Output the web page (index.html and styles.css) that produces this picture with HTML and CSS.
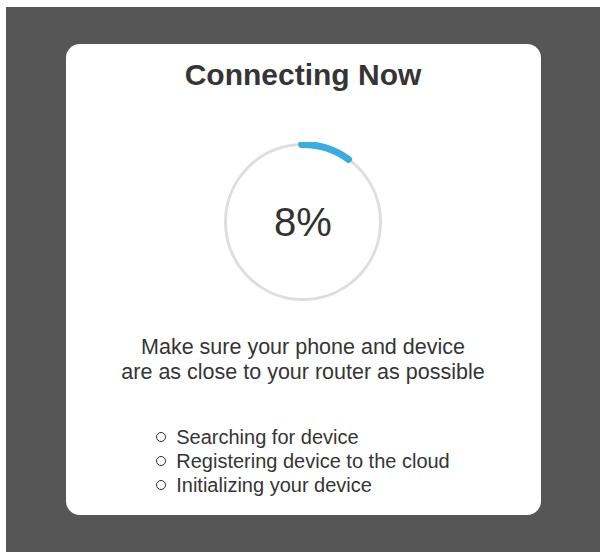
FILE: index.html
```html
<!DOCTYPE html>
<html>

<head>
    <meta charset="UTF-8">
    <meta name="viewport" content="width=device-width, initial-scale=1.0">
    <title>Connecting Now</title>
    <link rel="stylesheet" href="styles.css">
</head>

<body>
    <div id="frame">
        <div class="card">
            <h1 class="title">Connecting Now</h1>
            <div class="progress">
                <svg class="ring" width="160" height="160" viewBox="0 0 160 160">
                    <circle cx="80" cy="80" r="77.5" fill="none" stroke="#dedede" stroke-width="3" />
                    <path d="M78.65 2.51 A77.5 77.5 0 0 1 125.55 17.30" fill="none" stroke="#3aace0" stroke-width="7" stroke-linecap="round" />
                </svg>
                <span class="percent">8%</span>
            </div>
            <p class="message">Make sure your phone and device<br>are as close to your router as possible</p>
            <ul class="steps">
                <li>Searching for device</li>
                <li>Registering device to the cloud</li>
                <li>Initializing your device</li>
            </ul>
        </div>
    </div>
</body>

</html>
```

FILE: styles.css
```css
* {
    margin: 0;
    padding: 0;
    border: none;
    box-sizing: border-box;
}

html,
body {
    width: 100%;
    background: white;
    font-family: "Liberation Sans", Arial, sans-serif;
    color: #353535;
}

#frame {
    margin: 7px 6px 0 6px;
    width: 594px;
    height: 545px;
    background-color: #565656;
    padding-top: 37px;
}

.card {
    width: 475px;
    height: 471px;
    margin: 0 auto;
    background: white;
    border-radius: 14px;
    padding-top: 13px;
    display: flex;
    flex-direction: column;
    align-items: center;
}

.title {
    font-size: 30px;
    line-height: 36px;
    font-weight: bold;
}

.progress {
    position: relative;
    width: 160px;
    height: 160px;
    margin-top: 49px;
    display: flex;
    align-items: center;
    justify-content: center;
}

.ring {
    position: absolute;
    top: 0;
    left: 0;
}

.percent {
    font-size: 40px;
    color: #333;
    position: relative;
}

.message {
    margin-top: 33px;
    font-size: 21.5px;
    line-height: 25px;
    text-align: center;
}

.steps {
    margin-top: 40px;
    list-style-type: none;
    font-size: 20px;
    line-height: 24px;
}

.steps li {
    display: flex;
    align-items: center;
}

.steps li::before {
    content: "";
    width: 8px;
    height: 8px;
    border: 1.5px solid #333;
    border-radius: 50%;
    margin-right: 10px;
}
```
